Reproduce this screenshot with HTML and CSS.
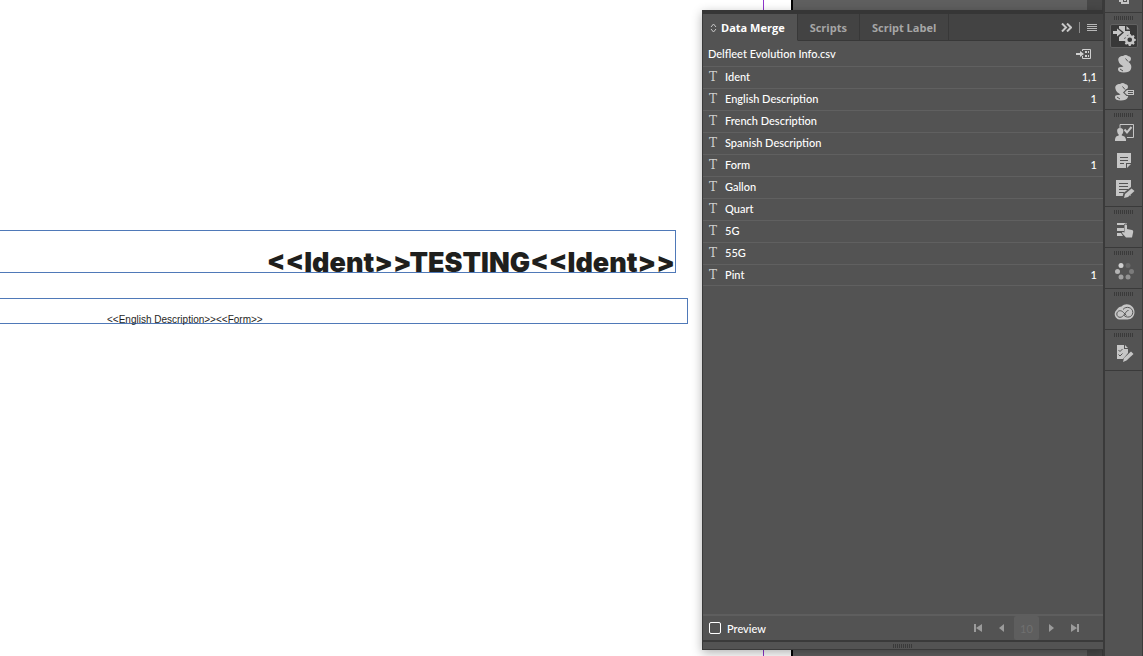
FILE: index.html
```html
<!DOCTYPE html>
<html lang="en">
<head>
<meta charset="utf-8">
<title>Data Merge</title>
<link rel="stylesheet" href="styles.css">
</head>
<body>
<div class="workspace">
  <main class="page">
    <div class="margin-guide"></div>
    <div class="frame frame-title">&lt;&lt;Ident&gt;&gt;TESTING&lt;&lt;Ident&gt;&gt;</div>
    <div class="frame frame-body">&lt;&lt;English Description&gt;&gt;&lt;&lt;Form&gt;&gt;</div>
  </main>
  <div class="pasteboard"></div>
  <div class="scrollbar"></div>

  <section class="panel">
    <header class="tabs">
      <button class="tab active" type="button">
        <svg class="updown" width="7" height="10" viewBox="0 0 7 10"><path d="M1 4l2.500-3L6 4M1 6l2.500 3L6 6"/></svg>Data Merge</button>
      <button class="tab" type="button">Scripts</button>
      <button class="tab" type="button">Script Label</button>
      <div class="tab-tools">
        <button class="tool" type="button" aria-label="Collapse"><svg width="11" height="9" viewBox="0 0 11 9"><path class="chev" d="M1 .5l4 4-4 4M6 .5l4 4-4 4"/></svg></button>
        <span class="tool-rule"></span>
        <button class="tool" type="button" aria-label="Panel menu"><svg width="10" height="8" viewBox="0 0 10 8"><path class="menu-lines" d="M0 .5h10M0 2.500h10M0 4.500h10M0 6.500h10"/></svg></button>
      </div>
    </header>
    <div class="source">
      <span>Delfleet Evolution Info.csv</span>
      <svg width="16" height="12" viewBox="0 0 16 12"><path d="M6.500 3V1.500h8v9h-8V8" fill="none" stroke="#d0d0d0"/><path d="M0 5h4V3l4 3-4 3V7H0zM9 3h2v2H9zM12 3h1v2h-1zM9 7h2v2H9zM12 7h1v2h-1z" fill="#d0d0d0"/></svg>
    </div>
    <ul class="fields">
      <li><i>T</i><span>Ident</span><b>1,1</b></li>
      <li><i>T</i><span>English Description</span><b>1</b></li>
      <li><i>T</i><span>French Description</span></li>
      <li><i>T</i><span>Spanish Description</span></li>
      <li><i>T</i><span>Form</span><b>1</b></li>
      <li><i>T</i><span>Gallon</span></li>
      <li><i>T</i><span>Quart</span></li>
      <li><i>T</i><span>5G</span></li>
      <li><i>T</i><span>55G</span></li>
      <li><i>T</i><span>Pint</span><b>1</b></li>
    </ul>
    <footer class="preview">
      <label class="check"><input type="checkbox">Preview</label>
      <div class="pager">
        <button type="button" aria-label="First record"><svg width="10" height="10" viewBox="0 0 10 10"><path d="M1 1h2v8H1zM9 1v8L3 5z"/></svg></button>
        <button type="button" aria-label="Previous record"><svg width="10" height="10" viewBox="0 0 10 10"><path d="M7 1v8L2 5z"/></svg></button>
        <input type="text" value="10" aria-label="Record" disabled>
        <button type="button" aria-label="Next record"><svg width="10" height="10" viewBox="0 0 10 10"><path d="M3 1v8l5-4z"/></svg></button>
        <button type="button" aria-label="Last record"><svg width="10" height="10" viewBox="0 0 10 10"><path d="M7 1h2v8H7zM1 1v8l6-4z"/></svg></button>
      </div>
    </footer>
    <div class="resize"><span class="grip"></span></div>
  </section>

  <nav class="dock">
    <div class="group group-cut">
      <svg width="12" height="6" viewBox="0 0 12 6"><path d="M1 1h2M4 0v3h6V0M7 0v1" fill="none" stroke="#c6c6c6" stroke-width="2"/></svg>
    </div>
    <div class="group">
      <span class="grip"></span>
      <button class="icon selected" type="button" aria-label="Data Merge">
        <svg width="24" height="20" viewBox="0 0 24 20"><path d="M7 0h6v5h5v3.500a6 6 0 0 0-6 6.500H7v-4l5-4.500-5-4z"/><path d="M14.500 0L18 3.500h-3.500z"/><path d="M1 5h4V2.500l5 4-5 4V8H1z"/><path d="M17 8.500h2l.4 1.500 1.200.5 1.400-.8 1.300 1.300-.8 1.400.5 1.200 1.500.4v1.900l-1.500.4-.5 1.200.8 1.400-1.300 1.300-1.400-.8-1.200.5-.4 1.500h-2l-.4-1.500-1.200-.5-1.400.8-1.300-1.300.8-1.400-.5-1.200-1.500-.4V14l1.500-.4.5-1.200-.8-1.400L14 9.700l1.400.8 1.200-.5zM18 12.300a2.500 2.500 0 1 0 0 5 2.500 2.500 0 0 0 0-5z" fill-rule="evenodd" transform="translate(1 0) scale(.93)"/></svg>
      </button>
      <button class="icon" type="button" aria-label="Scripts">
        <svg width="24" height="20" viewBox="0 0 24 20"><path d="M6.500 7C5.500 3.500 8 2 11 2c1.500-1.500 4-1.500 5 0 2.500.3 3.300 1.800 2.900 3.500-.3 1.400-1.400 2-2.400 2.500 2.500 1.500 3.500 4.500 2.500 7-1 2.700-4 3.600-7.500 3.500-3.200 0-5.500-1-5.500-3.200 0-1.800 1.500-2.600 3.500-2.300l2-.5C9 11 7 9.500 6.500 7z"/><path class="cut" d="M13.500 4.500l2.500 3M8 15l3 2"/></svg>
      </button>
      <button class="icon" type="button" aria-label="Script Label">
        <svg width="24" height="20" viewBox="0 0 24 20"><path d="M3.500 7C2.500 3.500 5 2 8 2c1.500-1.500 4-1.500 5 0 2.500.3 3.300 1.800 2.900 3.500-.3 1.400-1.400 2-2.400 2.500 2.500 1.500 3.500 4.500 2.500 7-1 2.700-4 3.600-7.500 3.500-3.200 0-5.500-1-5.500-3.200 0-1.800 1.500-2.600 3.500-2.300l2-.5C6 11 4 9.500 3.500 7z"/><path class="cut" d="M10.500 4.500l2.500 3M5 15l3 2"/><path class="halo" d="M11 10.500L14.500 7H23v7h-8.500z"/><path d="M12.500 10.500L15 8h7v5h-7z"/><path class="cut" d="M16 9.500h5M16 11.500h5"/></svg>
      </button>
    </div>
    <div class="group">
      <span class="grip"></span>
      <button class="icon" type="button" aria-label="Assignments">
        <svg width="24" height="20" viewBox="0 0 24 20"><path class="line" d="M8 5V1.500h13.500v13H15"/><path d="M8 5c2.500 0 3.500 1.500 3.300 3.500-.2 1.500-.8 2.500-1.500 3v1c2 .5 3.700 1 4.200 4V18H3v-1.500c.3-3 1.700-3.500 3.700-4v-1c-.7-.5-1.300-1.500-1.500-3C5 6.500 5.500 5 8 5z"/><path class="line thick" d="M12.500 6.500l2.500 3L19.500 4"/></svg>
      </button>
      <button class="icon" type="button" aria-label="Notes">
        <svg width="24" height="20" viewBox="0 0 24 20"><path d="M5 2h14v10h-5v5H5zM15 13h4l-4 4z"/><path class="cut" d="M8 6.500h8M8 9.500h8M8 12.500h4"/></svg>
      </button>
      <button class="icon" type="button" aria-label="Track Changes">
        <svg width="24" height="20" viewBox="0 0 24 20"><path d="M4 1h15v16H4z"/><path class="cut" d="M7 4.500h9M7 7.500h9M7 10.500h9M7 13.500h5"/><path class="halo" d="M10 20l1.500-6L19 8l4.500 3.500-8 8z"/><path d="M12 19l1-4 6.500-5.500 3 2.500-6.500 6z"/></svg>
      </button>
    </div>
    <div class="group">
      <span class="grip"></span>
      <button class="icon" type="button" aria-label="Text Actions">
        <svg width="24" height="20" viewBox="0 0 24 20"><path d="M5 3h10v2H5zM5 8h8v3H5zM5 13h6v3H5z"/><path class="halo" d="M12 5c0-2 4-2 4 0v3l5 1v8l-3 2h-5l-4-6 2-2h1z"/><path d="M12.500 5.500c0-1.500 2.500-1.500 2.500 0V9l5 1c1 .3 1.300 1 1.200 2l-1.200 5.500h-6L10 13c0-1 1-1.500 2.500-.5z"/></svg>
      </button>
    </div>
    <div class="group">
      <span class="grip"></span>
      <button class="icon" type="button" aria-label="Progress">
        <svg width="24" height="20" viewBox="0 0 24 20"><circle cx="9" cy="4.500" r="2.500" fill="#d0d0d0"/><circle cx="16" cy="4.500" r="2.500" fill="#696969"/><circle cx="19.500" cy="10.500" r="2.500" fill="#7b7b7b"/><circle cx="16" cy="16" r="2.500" fill="#929292"/><circle cx="9" cy="16" r="2.500" fill="#a0a0a0"/><circle cx="5.500" cy="10.500" r="2.500" fill="#b4b4b4"/></svg>
      </button>
    </div>
    <div class="group">
      <span class="grip"></span>
      <button class="icon" type="button" aria-label="CC Libraries">
        <svg width="24" height="20" viewBox="0 0 24 20"><path d="M7.500 17.500A5.500 5.500 0 0 1 4.500 8C6 5.500 8 4.500 9.500 4.500 14-.5 22.500 3 22.500 10c0 4.500-3 7.500-7 7.500z"/><path class="cut" d="M14.500 13.500l-3-3C9 7.500 5 8.500 4.800 12c0 2 1.500 3.300 3.200 3.300 2 0 3-1.300 4.500-3 1.500-2 2-3.800 4-3.800M11 7.500c3-4 10-2 9.800 3-.3 5-6.300 6-9 2.500"/></svg>
      </button>
    </div>
    <div class="group">
      <span class="grip"></span>
      <button class="icon" type="button" aria-label="Preflight">
        <svg width="24" height="20" viewBox="0 0 24 20"><path d="M5 2h7v4h4v4l-5 6H5zM13 2l3 3h-3z"/><path class="cut" d="M6.500 7L8 8.500 10.500 6M6.500 11.500L8 13l2.500-2.500"/><path d="M11 19l1-4 7-6.500 2.500 2.500-7 6.500z"/></svg>
      </button>
    </div>
  </nav>
</div>
</body>
</html>
```
FILE: styles.css
```css
* { box-sizing: border-box; }

body {
  margin: 0;
  font-family: Lato, "Open Sans", sans-serif;
  font-size: 11px;
  color: #fff;
}

button {
  border: 0;
  padding: 0;
  background: none;
  color: inherit;
  font: inherit;
}

svg { display: block; }

.workspace {
  position: relative;
  display: flex;
  height: 100vh;
  min-height: 400px;
  overflow: hidden;
  background: #535353;
}

/* document area */
.page {
  position: relative;
  flex: 1;
  background: #fff;
  border-right: 2px solid #000;
}

.margin-guide {
  position: absolute;
  top: 0;
  bottom: 0;
  right: 27px;
  width: 1px;
  background: #8f35cc;
}

.frame {
  position: absolute;
  left: 0;
  border: 1px solid #4f79b8;
  border-left: 0;
  color: #1f1f1d;
  white-space: nowrap;
}

.frame-title {
  top: 230px;
  width: 676px;
  height: 43px;
  padding-top: 22px;
  font: 900 27px/19px Inter, "Liberation Sans", sans-serif;
  text-align: right;
}

.frame-body {
  top: 298px;
  width: 688px;
  height: 26px;
  padding: 13px 0 0 107px;
  font: 10px/15px "Liberation Sans", Arial, sans-serif;
}

.pasteboard {
  width: 294px;
  background: #5f5f5f;
}

.scrollbar {
  width: 16px;
  background: #484848;
  border-right: 1px solid #3b3b3b;
}

/* floating panel */
.panel {
  position: absolute;
  top: 10px;
  right: 39px;
  bottom: 6px;
  width: 402px;
  display: flex;
  flex-direction: column;
  background: #535353;
  border: 1px solid #3a3a3a;
  border-top: 4px solid #363636;
  box-shadow: 0 3px 10px rgba(0, 0, 0, .3);
}

.tabs {
  display: flex;
  height: 27px;
  background: #434343;
}

.tab {
  padding: 1px 12px 0;
  border-right: 1px solid #383838;
  border-bottom: 1px solid #383838;
  color: #a6a6a6;
  font: bold 11px/26px "Open Sans", sans-serif;
}

.tab.active {
  display: flex;
  align-items: center;
  gap: 4px;
  padding-left: 7px;
  background: #535353;
  border-bottom-color: #535353;
  color: #fff;
}

.updown, .chev {
  fill: none;
  stroke: #c8c8c8;
}

.chev { stroke-width: 2; }
.menu-lines { stroke: #b8b8b8; }

.tab-tools {
  flex: 1;
  display: flex;
  align-items: center;
  justify-content: flex-end;
  gap: 7px;
  padding: 1px 6px 0 0;
  border-bottom: 1px solid #383838;
}

.tool-rule {
  width: 1px;
  height: 11px;
  background: #8c8c8c;
}

.source {
  display: flex;
  align-items: center;
  justify-content: space-between;
  height: 25px;
  padding: 0 11px 0 5px;
  font-weight: 500;
}

.fields {
  flex: 1;
  margin: 0;
  padding: 0;
  list-style: none;
}

.fields li {
  display: flex;
  height: 22px;
  padding: 0 6px;
  border-top: 1px solid #606060;
  line-height: 20px;
  font-weight: 500;
}

.fields li:last-child { border-bottom: 1px solid #606060; }

.fields i {
  width: 16px;
  color: #d0d0d0;
  font: 12px/20px "DejaVu Serif", serif;
}

.fields span { flex: 1; }
.fields b { font-weight: 500; }

.preview {
  display: flex;
  justify-content: space-between;
  height: 26px;
  padding: 0 16px 0 6px;
  border-top: 2px solid #5e5e5e;
}

.check {
  display: flex;
  align-items: center;
  gap: 6px;
  font-weight: 500;
}

.check input {
  appearance: none;
  width: 12px;
  height: 12px;
  margin: 0;
  border: 1px solid #fff;
  border-radius: 2px;
}

.pager {
  display: flex;
  align-items: center;
}

.pager button {
  display: flex;
  justify-content: center;
  width: 24px;
}

.pager path { fill: #9b9b9b; }

.pager input {
  width: 25px;
  height: 24px;
  padding: 0;
  border: 0;
  border-radius: 2px;
  background: #5e5e5e;
  color: #707070;
  font: inherit;
  text-align: center;
}

.resize {
  display: flex;
  justify-content: center;
  align-items: center;
  height: 9px;
  border-top: 2px solid #3a3a3a;
}

.grip {
  width: 20px;
  height: 4px;
  background: repeating-linear-gradient(90deg, #3a3a3a 0 1px, #535353 1px 2px);
}

/* collapsed panel dock */
.dock {
  position: relative;
  width: 40px;
  background: #535353;
  border-left: 2px solid #3a3a3a;
  border-right: 1px solid #3a3a3a;
}

.group {
  display: flex;
  flex-direction: column;
  align-items: center;
  padding-bottom: 4px;
  border-bottom: 1px solid #3a3a3a;
}

.group-cut {
  height: 13px;
  padding: 0;
}

.dock .grip { margin: 3px 0; }

.icon {
  display: flex;
  align-items: center;
  justify-content: center;
  width: 28px;
  height: 24px;
  margin: 1px 0;
  border-radius: 2px;
  fill: #c6c6c6;
}

.icon + .icon { margin-top: 3px; }

.icon.selected {
  background: #383838;
  border: 1px solid #626262;
}

.cut {
  fill: none;
  stroke: #535353;
}

.halo { fill: #535353; }

.line {
  fill: none;
  stroke: #c6c6c6;
}

.thick { stroke-width: 2; }
```
